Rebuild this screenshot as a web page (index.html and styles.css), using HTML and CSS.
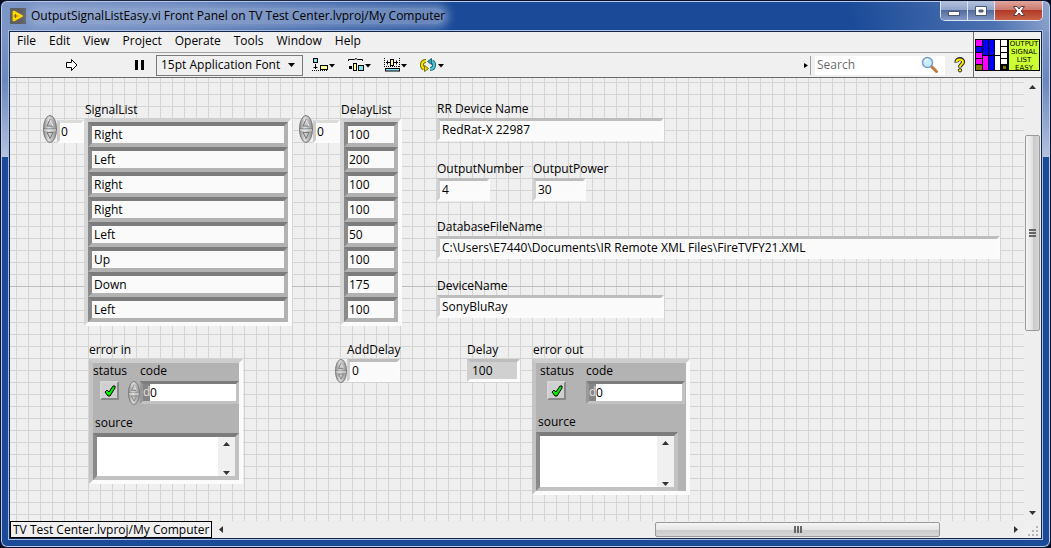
FILE: index.html
```html
<!DOCTYPE html>
<html lang="en">
<head>
    <meta charset="UTF-8">
    <meta name="viewport" content="width=device-width, initial-scale=1.0">
    <title>OutputSignalListEasy.vi Front Panel</title>
    <link rel="stylesheet" href="styles.css">
</head>
<body>
    <!-- shared icons -->
    <svg class="defs" width="0" height="0">
        <symbol id="spin" viewBox="0 0 14 28">
            <ellipse cx="7" cy="14" rx="6.5" ry="13.5" fill="url(#metal)" stroke="#777"/>
            <path d="M0.5 14H13.5" stroke="#777"/>
            <path d="M1 15H13" stroke="#eee"/>
            <path d="M4 11L7 4.500L10 11Z" fill="#c8c8c8" stroke="#777"/>
            <path d="M4 17.500L7 23.500L10 17.500Z" fill="#c8c8c8" stroke="#777"/>
            <path d="M7 5L10 11" stroke="#fff"/>
        </symbol>
        <symbol id="tick" viewBox="0 0 12 12">
            <path d="M1 7L3 5L5 7L9 1L11 1L11 3L6 11L4 11Z" fill="#00f000" stroke="#000"/>
        </symbol>
        <symbol id="down" viewBox="0 0 7 4"><path d="M0 0H7L3.500 4Z"/></symbol>
        <symbol id="up" viewBox="0 0 7 4"><path d="M0 4H7L3.500 0Z"/></symbol>
        <linearGradient id="metal">
            <stop offset="0" stop-color="#8c8c8c"/>
            <stop offset=".4" stop-color="#dedede"/>
            <stop offset="1" stop-color="#8f8f8f"/>
        </linearGradient>
    </svg>

    <div class="window">
        <header class="titlebar">
            <svg class="app-icon" width="16" height="16" viewBox="0 0 16 16">
                <rect width="16" height="16" fill="#5f5f62"/>
                <path d="M2.500 3.500L4 2.500L13 7.500V8.500L4 13.500L2.500 12.500Z" fill="#ffd800"/>
                <path d="M3.500 8H7.500M5.500 6V10" stroke="#7a6500"/>
            </svg>
            <h1 class="title">OutputSignalListEasy.vi Front Panel on TV Test Center.lvproj/My Computer</h1>
            <div class="window-buttons">
                <button class="minimize" aria-label="Minimize">
                    <svg width="12" height="10" viewBox="0 0 12 10"><rect x=".5" y="5.500" width="11" height="4" fill="#fff" stroke="#4d5870"/></svg>
                </button>
                <button class="maximize" aria-label="Maximize">
                    <svg width="12" height="10" viewBox="0 0 12 10"><path d="M.5.5H11.500V9.500H.5ZM4 4V6H8V4Z" fill="#fff" fill-rule="evenodd" stroke="#4d5870"/></svg>
                </button>
                <button class="close" aria-label="Close">
                    <svg width="12" height="10" viewBox="0 0 12 10"><path d="M.5.5H4L6 3L8 .5H11.500L8.200 5L11.500 9.500H8L6 7L4 9.500H.5L3.800 5Z" fill="#fff" stroke="#5b3b40"/></svg>
                </button>
            </div>
        </header>

        <main class="client">
            <div class="top">
                <div class="bars">
                    <nav class="menu">
                        <a href="#">File</a>
                        <a href="#">Edit</a>
                        <a href="#">View</a>
                        <a href="#">Project</a>
                        <a href="#">Operate</a>
                        <a href="#">Tools</a>
                        <a href="#">Window</a>
                        <a href="#">Help</a>
                    </nav>
                    <div class="toolbar">
                        <button class="run" aria-label="Run">
                            <svg width="12" height="14" viewBox="0 0 12 14"><path d="M.5 4.500H5.500V1.500L11 7L5.500 12.500V9.500H.5Z" fill="#fff" stroke="#000"/></svg>
                        </button>
                        <button class="pause" aria-label="Pause">
                            <svg width="9" height="10" viewBox="0 0 9 10"><path d="M0 0H3V10H0ZM6 0H9V10H6Z"/></svg>
                        </button>
                        <div class="font-picker">
                            <select aria-label="Font"><option>15pt Application Font</option></select>
                            <svg width="7" height="4"><use href="#down"/></svg>
                        </div>
                        <button class="tool" aria-label="Align objects">
                            <svg width="24" height="14" viewBox="0 0 24 14">
                                <rect x="1.500" y=".5" width="4" height="4" fill="#7fe5f2" stroke="#000"/>
                                <path d="M3.500 6V11M1.500 9.500H5.500" stroke="#000"/>
                                <path d="M0 12.500H16" stroke="#000" stroke-dasharray="1 1"/>
                                <rect x="8.500" y="7.500" width="7" height="4" fill="#ffff90" stroke="#000"/>
                                <path d="M17 6H23L20 9.500Z"/>
                            </svg>
                        </button>
                        <button class="tool" aria-label="Distribute objects">
                            <svg width="24" height="14" viewBox="0 0 24 14">
                                <path d="M.5 3V1.500H6.500L8 .5L9.500 1.500H14.500V3" fill="none" stroke="#000"/>
                                <rect x="1" y="8" width="3" height="3"/>
                                <rect x="5.500" y="5.500" width="3" height="7" fill="#ffff90" stroke="#000"/>
                                <rect x="10.500" y="7.500" width="5" height="5" fill="#7fe5f2" stroke="#000"/>
                                <path d="M17 6H23L20 9.500Z"/>
                            </svg>
                        </button>
                        <button class="tool" aria-label="Resize objects">
                            <svg width="24" height="14" viewBox="0 0 24 14">
                                <path d="M.5 0V9M15.500 0V9M0 8.500H16" stroke="#000" stroke-dasharray="1 1"/>
                                <path d="M2 4.500H6M10 4.500H14M3.500 2.500V6.500M12.500 2.500V6.500" stroke="#000"/>
                                <rect x="6.500" y="1.500" width="3" height="6" fill="#ffff90" stroke="#000"/>
                                <rect x="1.500" y="10.500" width="14" height="2.500" fill="#7fe5f2" stroke="#000"/>
                                <path d="M17 6H23L20 9.500Z"/>
                            </svg>
                        </button>
                        <button class="tool" aria-label="Reorder">
                            <svg width="24" height="14" viewBox="0 0 24 14">
                                <path d="M6 3C1 3 1 9 4 10.500" fill="none" stroke="#776f00" stroke-width="4"/>
                                <path d="M6 3C1 3 1 9 4 10.500" fill="none" stroke="#f0e000" stroke-width="2"/>
                                <path d="M4.500 7.500L8.500 10.500L4.500 13.500Z" fill="#f0e000" stroke="#776f00"/>
                                <path d="M10 11C15 11 15 5 12 3.500" fill="none" stroke="#1c6975" stroke-width="4"/>
                                <path d="M10 11C15 11 15 5 12 3.500" fill="none" stroke="#55c7d5" stroke-width="2"/>
                                <path d="M11.500 .5L7.500 3.500L11.500 6.500Z" fill="#2fa5b5" stroke="#1c6975"/>
                                <path d="M18 6H24L21 9.500Z"/>
                            </svg>
                        </button>
                        <div class="search">
                            <svg width="4" height="5" viewBox="0 0 4 5"><path d="M0 0L4 2.500L0 5Z"/></svg>
                            <div class="search-box">
                                <input type="text" placeholder="Search" aria-label="Search">
                                <svg width="18" height="18" viewBox="0 0 18 18">
                                    <path d="M10 10L15.500 15.500" stroke="#c47a3a" stroke-width="3" stroke-linecap="round"/>
                                    <circle cx="6.500" cy="6.500" r="5" fill="#c9ecff" stroke="#6f9fd0" stroke-width="1.500"/>
                                    <path d="M4 6A3 3 0 0 1 7 3.500" fill="none" stroke="#fff" stroke-width="1.500"/>
                                </svg>
                            </div>
                        </div>
                        <button class="help" aria-label="Help">
                            <svg width="12" height="16" viewBox="0 0 12 16">
                                <path d="M2.500 5.500C2 1 9.500 1 9 5C9 7.500 6 7 6 10.500" fill="none" stroke="#222" stroke-width="4"/>
                                <path d="M2.500 5C2.500 1.500 9 1.500 9 5C9 7.500 6 7 6 10" fill="none" stroke="#ffee00" stroke-width="2"/>
                                <circle cx="6" cy="13.300" r="1.700" fill="#ffee00" stroke="#222"/>
                            </svg>
                        </button>
                    </div>
                </div>
                <div class="vi-icons">
                    <svg width="33" height="32" viewBox="0 0 33 32">
                        <rect width="33" height="32" fill="#000"/>
                        <path d="M1 1H7V7H1ZM1 14H7V19H1ZM1 20H7V25H1ZM8 17H13V31H8Z" fill="#f0f"/>
                        <path d="M1 8H7V13H1ZM8 1H13V16H8ZM14 1H19V16H14ZM14 17H19V31H14Z" fill="#00f"/>
                        <path d="M20 1H25V16H20ZM20 17H25V31H20ZM26 1H32V7H26ZM26 8H32V13H26ZM26 14H32V19H26ZM26 20H32V25H26Z" fill="#fff"/>
                        <path d="M1 26H7V31H1ZM28 27H31V30H28Z" fill="#807800"/>
                    </svg>
                    <div class="vi-name">OUTPUT<br>SIGNAL<br>LIST<br>EASY</div>
                </div>
            </div>

            <div class="workspace">
                <div class="panel">
                    <div class="array signal-list">
                        <h2 class="caption">SignalList</h2>
                        <svg class="spinner" width="14" height="28"><use href="#spin"/></svg>
                        <input class="field index" type="text" value="0" aria-label="SignalList index">
                        <div class="elements">
                            <input type="text" value="Right" aria-label="Signal 0">
                            <input type="text" value="Left" aria-label="Signal 1">
                            <input type="text" value="Right" aria-label="Signal 2">
                            <input type="text" value="Right" aria-label="Signal 3">
                            <input type="text" value="Left" aria-label="Signal 4">
                            <input type="text" value="Up" aria-label="Signal 5">
                            <input type="text" value="Down" aria-label="Signal 6">
                            <input type="text" value="Left" aria-label="Signal 7">
                        </div>
                    </div>

                    <div class="array delay-list">
                        <h2 class="caption">DelayList</h2>
                        <svg class="spinner" width="14" height="28"><use href="#spin"/></svg>
                        <input class="field index" type="text" value="0" aria-label="DelayList index">
                        <div class="elements">
                            <input type="text" value="100" aria-label="Delay 0">
                            <input type="text" value="200" aria-label="Delay 1">
                            <input type="text" value="100" aria-label="Delay 2">
                            <input type="text" value="100" aria-label="Delay 3">
                            <input type="text" value="50" aria-label="Delay 4">
                            <input type="text" value="100" aria-label="Delay 5">
                            <input type="text" value="175" aria-label="Delay 6">
                            <input type="text" value="100" aria-label="Delay 7">
                        </div>
                    </div>

                    <div class="control rr-device">
                        <label for="rr-device">RR Device Name</label>
                        <input class="field" id="rr-device" type="text" value="RedRat-X 22987">
                    </div>
                    <div class="control output-number">
                        <label for="output-number">OutputNumber</label>
                        <input class="field" id="output-number" type="text" value="4">
                    </div>
                    <div class="control output-power">
                        <label for="output-power">OutputPower</label>
                        <input class="field" id="output-power" type="text" value="30">
                    </div>
                    <div class="control database">
                        <label for="database">DatabaseFileName</label>
                        <input class="field" id="database" type="text" value="C:\Users\E7440\Documents\IR Remote XML Files\FireTVFY21.XML">
                    </div>
                    <div class="control device-name">
                        <label for="device-name">DeviceName</label>
                        <input class="field" id="device-name" type="text" value="SonyBluRay">
                    </div>
                    <div class="control add-delay">
                        <label for="add-delay">AddDelay</label>
                        <div class="spin-row">
                            <svg class="spinner" width="12" height="24"><use href="#spin"/></svg>
                            <input class="field" id="add-delay" type="text" value="0">
                        </div>
                    </div>
                    <div class="control delay">
                        <label for="delay">Delay</label>
                        <input class="field readonly" id="delay" type="text" value="100" readonly>
                    </div>

                    <div class="error error-in">
                        <h2 class="caption">error in</h2>
                        <div class="cluster">
                            <div class="cluster-row">
                                <div class="status">
                                    <label for="status-in">status</label>
                                    <div class="check">
                                        <input id="status-in" type="checkbox" checked>
                                        <svg width="12" height="12"><use href="#tick"/></svg>
                                    </div>
                                </div>
                                <div class="code">
                                    <label for="code-in">code</label>
                                    <div class="spin-row">
                                        <svg class="spinner" width="12" height="24"><use href="#spin"/></svg>
                                        <div class="code-box">
                                            <span class="radix">d</span>
                                            <input id="code-in" type="text" value="0">
                                        </div>
                                    </div>
                                </div>
                            </div>
                            <label class="source-label" for="source-in">source</label>
                            <div class="source">
                                <textarea id="source-in"></textarea>
                                <div class="source-scroll">
                                    <svg width="7" height="4"><use href="#up"/></svg>
                                    <svg width="7" height="4"><use href="#down"/></svg>
                                </div>
                            </div>
                        </div>
                    </div>

                    <div class="error error-out">
                        <h2 class="caption">error out</h2>
                        <div class="cluster">
                            <div class="cluster-row">
                                <div class="status">
                                    <label for="status-out">status</label>
                                    <div class="check">
                                        <input id="status-out" type="checkbox" checked>
                                        <svg width="12" height="12"><use href="#tick"/></svg>
                                    </div>
                                </div>
                                <div class="code">
                                    <label for="code-out">code</label>
                                    <div class="code-box">
                                        <span class="radix">d</span>
                                        <input id="code-out" type="text" value="0" readonly>
                                    </div>
                                </div>
                            </div>
                            <label class="source-label" for="source-out">source</label>
                            <div class="source">
                                <textarea id="source-out" readonly></textarea>
                                <div class="source-scroll">
                                    <svg width="7" height="4"><use href="#up"/></svg>
                                    <svg width="7" height="4"><use href="#down"/></svg>
                                </div>
                            </div>
                        </div>
                    </div>
                </div>

                <div class="scroll vertical">
                    <button class="arrow" aria-label="Scroll up"><svg width="7" height="4"><use href="#up"/></svg></button>
                    <div class="space before"></div>
                    <div class="thumb"><i></i><i></i><i></i></div>
                    <div class="space after"></div>
                    <button class="arrow" aria-label="Scroll down"><svg width="7" height="4"><use href="#down"/></svg></button>
                </div>
            </div>

            <footer class="bottom">
                <button class="project">TV Test Center.lvproj/My Computer</button>
                <div class="scroll horizontal">
                    <button class="arrow" aria-label="Scroll left"><svg width="4" height="7" viewBox="0 0 4 7"><path d="M4 0V7L0 3.500Z"/></svg></button>
                    <div class="space before"></div>
                    <div class="thumb"><i></i><i></i><i></i></div>
                    <div class="space after"></div>
                    <button class="arrow" aria-label="Scroll right"><svg width="4" height="7" viewBox="0 0 4 7"><path d="M0 0V7L4 3.500Z"/></svg></button>
                </div>
                <svg class="grip" width="17" height="17" viewBox="0 0 17 17">
                    <path d="M12 5h2v2h-2zM12 9h2v2h-2zM8 9h2v2h-2zM12 13h2v2h-2zM8 13h2v2h-2zM4 13h2v2h-2z" fill="#b5b5b5"/>
                </svg>
            </footer>
        </main>
    </div>
</body>
</html>
```
FILE: styles.css
```css
* {
    box-sizing: border-box;
}

body {
    margin: 0;
    background-color: #050b1e;
    font-family: "Open Sans", "Noto Sans", sans-serif;
    font-size: 12px;
    line-height: 16px;
    color: #000;
}

button, input, select, textarea {
    font: inherit;
    color: inherit;
    margin: 0;
    padding: 0;
    border: none;
    border-radius: 0;
    background: none;
    outline: none;
    min-width: 0;
}

svg {
    display: block;
    flex: none;
}

h1, h2 {
    font-size: inherit;
    font-weight: normal;
    margin: 0;
}

.defs {
    position: absolute;
}

/* window frame */
.window {
    display: flex;
    flex-direction: column;
    height: 100vh;
    padding: 0 7px 7px;
    border: 1px solid #0a1430;
    border-radius: 7px;
    box-shadow: inset 0 0 0 1px #b9cbe8;
    background:
        linear-gradient(#7d96c6, #6b87bc 40%, #b4c2de) no-repeat 0 30px / 9px 126px,
        linear-gradient(#7d96c6, #6b87bc 40%, #b4c2de) no-repeat 100% 30px / 9px 126px,
        linear-gradient(100deg, #7d96c6 0, #5c7cb8 200px, rgba(26, 74, 152, 0) 420px) no-repeat 0 0 / 100% 30px,
        linear-gradient(255deg, #8fa5cd 0, rgba(111, 140, 194, 0.6) 60px, rgba(26, 74, 152, 0) 200px) no-repeat 0 0 / 100% 30px,
        #1a4a98;
}

.titlebar {
    display: flex;
    align-items: flex-start;
    height: 30px;
    padding-left: 2px;
}

.app-icon {
    margin-top: 7px;
}

.title {
    margin: 7px 0 0 5px;
    border-radius: 8px;
    white-space: nowrap;
    background-color: rgba(160, 178, 214, 0.6);
    box-shadow: 0 0 8px 4px rgba(160, 178, 214, 0.6);
}

.window-buttons {
    display: flex;
    height: 20px;
    margin-left: auto;
    border: 1px solid #dbe4f4;
    border-top: none;
    border-radius: 0 0 5px 5px;
    overflow: hidden;
}

.window-buttons button {
    display: grid;
    place-items: center;
    width: 27px;
    background: linear-gradient(#b5c2dc 0, #93a6ca 45%, #526c9f 50%, #8299c6 100%);
    border-right: 1px solid #dbe4f4;
}

.window-buttons .close {
    width: 47px;
    border-right: none;
    background: linear-gradient(#dfa69d 0, #cd7b6e 45%, #b13a28 50%, #c96246 100%);
}

.client {
    flex: 1;
    display: flex;
    flex-direction: column;
    min-height: 0;
    border: 1px solid #12264e;
    box-shadow: 0 0 0 1px #a9bfe2;
    margin: 0 1px 1px;
    background-color: #f0f0f0;
}

/* menu and toolbar */
.top {
    display: flex;
    border-bottom: 1px solid #6b6b6b;
}

.bars {
    flex: 1;
}

.menu {
    display: flex;
    gap: 13px;
    height: 21px;
    padding: 1px 7px;
    border-bottom: 1px solid #a0a0a0;
}

.menu a {
    color: inherit;
    text-decoration: none;
}

.toolbar {
    display: flex;
    align-items: center;
    height: 24px;
}

.run {
    margin-left: 56px;
}

.pause {
    margin: 0 12px 0 57px;
}

.font-picker {
    display: grid;
    align-items: center;
    width: 147px;
    height: 21px;
    margin-right: 9px;
    border: 1px solid #7a7a7a;
}

.font-picker select, .font-picker svg {
    grid-area: 1 / 1;
}

.font-picker select {
    appearance: none;
    width: 100%;
    padding-left: 4px;
}

.font-picker svg {
    justify-self: end;
    margin-right: 7px;
    pointer-events: none;
}

.tool {
    margin-right: 12px;
}

.search {
    display: flex;
    align-items: center;
    gap: 7px;
    margin-left: auto;
}

.search-box {
    display: flex;
    align-items: center;
    width: 130px;
    height: 19px;
    padding: 0 6px 0 2px;
    background-color: #fff;
    box-shadow: -4px 0 0 #f0f0f0, -5px 0 0 #a0a0a0;
}

.search-box input {
    flex: 1;
}

.search-box input::placeholder {
    color: #6d6d6d;
}

.help {
    margin: 0 7px 0 9px;
}

.vi-icons {
    display: flex;
    align-items: center;
    padding: 0 1px;
    border-left: 1px solid #6b6b6b;
}

.vi-name {
    width: 32px;
    height: 32px;
    border: 1px solid #000;
    background-color: #ccff33;
    font-family: "DejaVu Sans", sans-serif;
    font-size: 7px;
    line-height: 8px;
    text-align: center;
}

/* front panel grid */
.workspace {
    flex: 1;
    display: flex;
    min-height: 0;
}

.panel {
    flex: 1;
    position: relative;
    overflow: hidden;
    background-color: #efefef;
    background-image:
        linear-gradient(#bdbdbd, #bdbdbd),
        linear-gradient(90deg, #d4d4d4 1px, transparent 1px),
        linear-gradient(#d4d4d4 1px, transparent 1px);
    background-size: 100% 1px, 12px 12px, 12px 12px;
    background-position: 0 208px, 6px 4px, 6px 4px;
    background-repeat: no-repeat, repeat, repeat;
}

/* objects placed freely on the panel */
.array, .control, .error {
    position: absolute;
}

.signal-list { left: 33px; top: 24px; }
.delay-list { left: 289px; top: 24px; }
.rr-device { left: 427px; top: 23px; width: 227px; }
.output-number { left: 427px; top: 83px; width: 53px; }
.output-power { left: 523px; top: 83px; width: 53px; }
.database { left: 427px; top: 141px; width: 563px; }
.device-name { left: 427px; top: 200px; width: 227px; }
.add-delay { left: 325px; top: 264px; width: 65px; }
.delay { left: 457px; top: 264px; width: 53px; }
.error-in { left: 79px; top: 264px; width: 154px; }
.error-out { left: 522px; top: 264px; width: 158px; }

.control label {
    display: block;
    height: 17px;
    white-space: nowrap;
}

.field {
    display: block;
    width: 100%;
    height: 23px;
    padding-left: 2px;
    border: 3px solid;
    border-color: #bdbdbd #fbfbfb #fbfbfb #d0d0d0;
    background-color: #fafafa;
}

.field.readonly {
    background-color: #d0d0d0;
}

.array {
    display: grid;
    grid-template-columns: 14px 27px auto;
    grid-template-rows: 16px auto;
}

.array .caption {
    grid-column: 3;
    padding-left: 1px;
}

.array .spinner {
    grid-column: 1;
    margin-top: -3px;
}

.array .index {
    padding-left: 1px;
    margin-top: 2px;
    border-color: #dcdcdc #fbfbfb #fbfbfb #cbcbcb;
}

.elements {
    display: flex;
    flex-direction: column;
    border: 4px solid;
    border-color: #cfcfcf #fbfbfb #fbfbfb #d6d6d6;
}

.elements input {
    width: 200px;
    height: 25px;
    padding-left: 2px;
    border: 4px solid;
    border-color: #7c7c7c #b2b2b2 #b2b2b2 #8a8a8a;
    background-color: #fafafa;
}

.delay-list .elements input {
    width: 54px;
    padding-left: 1px;
}

.spin-row {
    display: flex;
}

.add-delay label {
    padding-left: 12px;
}

/* error clusters */
.error .caption {
    height: 17px;
}

.error-out .caption {
    padding-left: 1px;
}

.cluster {
    border: 4px solid;
    border-color: #cdcdcd #fbfbfb #fbfbfb #c4c4c4;
    background-color: #b3b3b3;
}

.cluster-row {
    display: flex;
    justify-content: space-between;
}

.cluster label {
    display: block;
}

.error-out .cluster-row {
    padding: 0 1px 0 4px;
}

.status label {
    height: 18px;
}

.check {
    display: grid;
    place-items: center;
    width: 19px;
    height: 19px;
    margin-left: 7px;
    border: 2px solid;
    border-color: #d5d5d5 #888 #888 #d5d5d5;
    background-color: #cfcfcf;
}

.check input, .check svg {
    grid-area: 1 / 1;
}

.check input {
    appearance: none;
    width: 100%;
    height: 100%;
}

.check svg {
    visibility: hidden;
    pointer-events: none;
}

.check input:checked + svg {
    visibility: visible;
}

.code label {
    height: 18px;
}

.error-in .code label {
    padding-left: 12px;
}

.code-box {
    display: flex;
    width: 99px;
    height: 23px;
    border: 3px solid;
    border-color: #7c7c7c #c2c2c2 #c2c2c2 #999;
    background-color: #fff;
}

.code-box input {
    flex: 1;
}

.radix {
    width: 7px;
    background-color: #858585;
    color: #e0e0e0;
}

.source-label {
    margin: 10px 0 2px 2px;
}

.source {
    display: flex;
    height: 47px;
    border: 4px solid;
    border-color: #7c7c7c #c2c2c2 #c2c2c2 #8a8a8a;
    background-color: #fff;
}

.source textarea {
    flex: 1;
    resize: none;
}

.source-scroll {
    display: flex;
    flex-direction: column;
    justify-content: space-between;
    align-items: center;
    width: 17px;
    padding: 5px 0 1px;
    background-color: #f0f0f0;
    fill: #333;
}

.error-out .source {
    width: 142px;
    height: 59px;
}

/* window scroll bars */
.scroll {
    display: flex;
    background-color: #eee;
    fill: #333;
}

.vertical {
    flex-direction: column;
    width: 17px;
    padding: 0 1px;
}

.horizontal {
    flex: 1;
    padding: 1px 0;
}

.arrow {
    display: grid;
    place-items: center;
    width: 17px;
    height: 17px;
    align-self: center;
}

.thumb {
    display: flex;
    align-items: center;
    justify-content: center;
    gap: 1px;
    border: 1px solid #9a9a9a;
    border-radius: 2px;
}

.thumb i {
    background-color: #666;
}

.vertical .thumb {
    flex: 195;
    flex-direction: column;
    background: linear-gradient(90deg, #f4f4f4, #e2e2e2 50%, #c9c9c9 55%, #d6d6d6);
}

.vertical .thumb i {
    width: 7px;
    height: 2px;
}

.horizontal .thumb {
    flex: 287;
    background: linear-gradient(#f4f4f4, #e6e6e6 50%, #cccccc 55%, #d6d6d6);
}

.horizontal .thumb i {
    width: 2px;
    height: 7px;
}

.vertical .before { flex: 40; }
.vertical .after { flex: 174; }
.horizontal .before { flex: 432; }
.horizontal .after { flex: 68; }

.bottom {
    display: flex;
    height: 17px;
}

.project {
    padding: 0 2px;
    border: 1px solid #000;
    line-height: 15px;
    white-space: nowrap;
}
```
